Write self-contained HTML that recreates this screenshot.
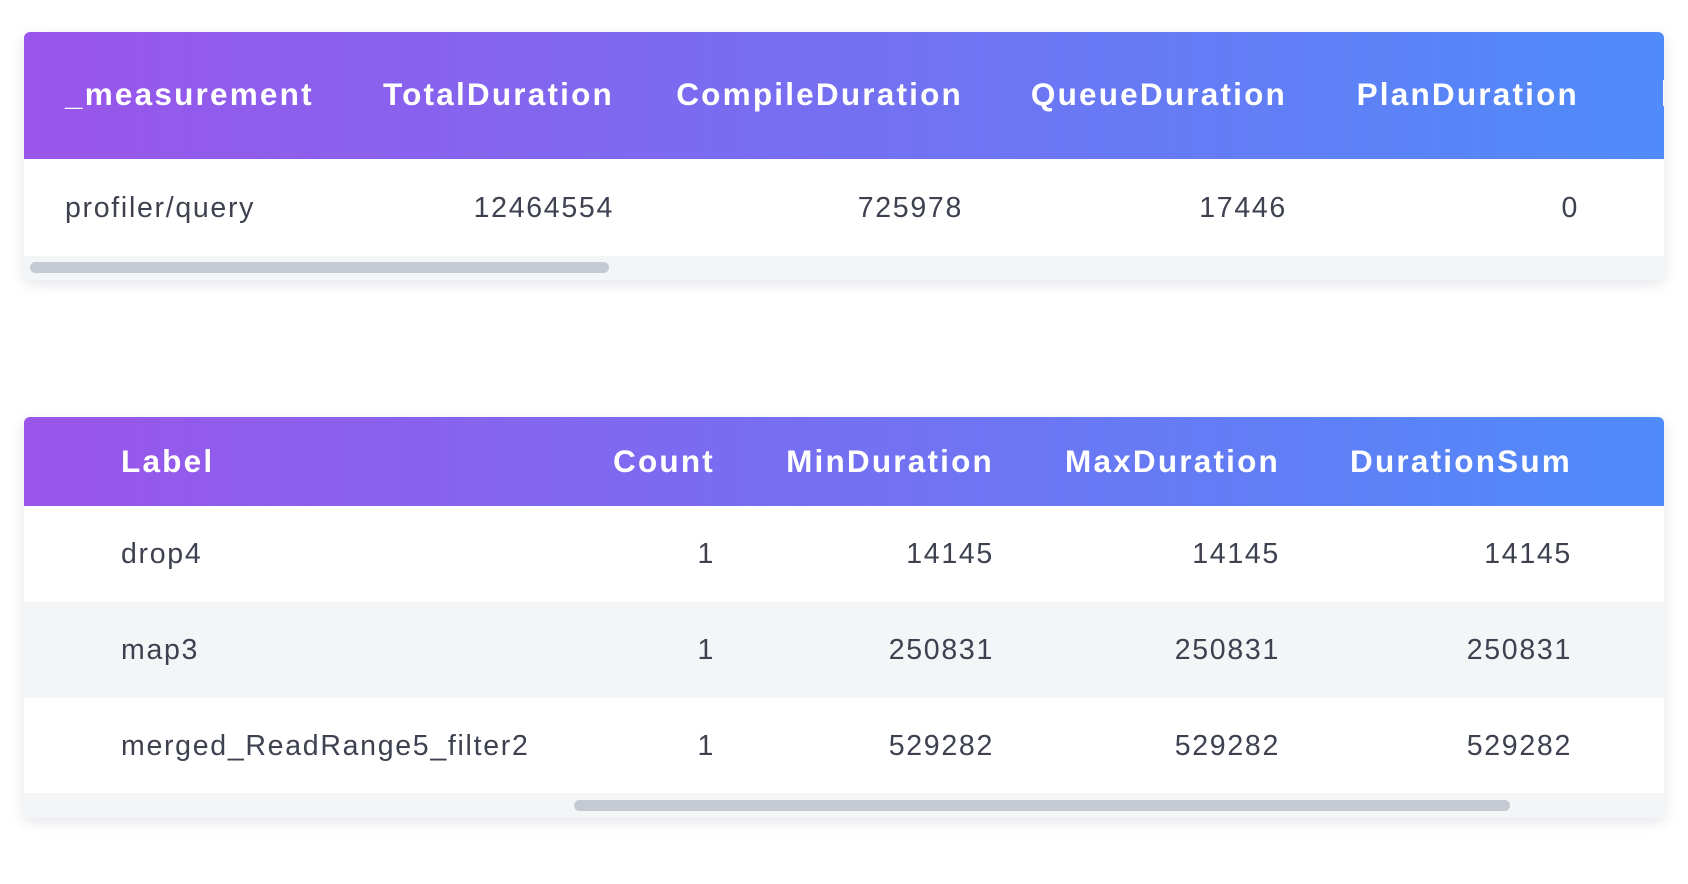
<!DOCTYPE html><html><head><style>
body{margin:0;width:1688px;height:884px;background:#fff;font-family:"Liberation Sans",sans-serif;position:relative;overflow:hidden}
.card{position:absolute;left:24px;width:1640px;background:#fff;border-radius:6px;overflow:hidden;box-shadow:0 4px 14px rgba(30,40,70,.12)}
.hd{position:absolute;left:0;top:0;width:100%;background:linear-gradient(90deg,#9a55ea,#4f8bf9)}
.t{position:absolute;white-space:nowrap;line-height:1}
.h{color:#fff;font-weight:bold;font-size:31.5px;letter-spacing:2.2px}
.d{color:#3e4150;font-size:28.5px;letter-spacing:1.7px}
.h.r{transform:translateX(-100%)}
.d.r{transform:translateX(-100%)}
.strip{position:absolute;left:0;width:100%;background:#f4f5f7}
.thumb{position:absolute;height:11px;border-radius:6px;background:#c5c9d1}
</style></head><body>
<div class="card" style="top:32px;height:248px">
<div class="hd" style="height:127px"></div>
<div class="t h" style="left:41px;top:47px">_measurement</div>
<div class="t h r" style="left:590px;top:47px">TotalDuration</div>
<div class="t h r" style="left:939px;top:47px">CompileDuration</div>
<div class="t h r" style="left:1263px;top:47px">QueueDuration</div>
<div class="t h r" style="left:1555px;top:47px">PlanDuration</div>
<div style="position:absolute;left:1639px;top:48px;width:3px;height:26px;background:#fff"></div>
<div class="t d" style="left:41px;top:162px">profiler/query</div>
<div class="t d r" style="left:590px;top:162px">12464554</div>
<div class="t d r" style="left:939px;top:162px">725978</div>
<div class="t d r" style="left:1263px;top:162px">17446</div>
<div class="t d r" style="left:1555px;top:162px">0</div>
<div class="strip" style="top:224px;height:24px"></div>
<div class="thumb" style="left:6px;top:230px;width:579px"></div>
</div>
<div class="card" style="top:417px;height:401px">
<div class="hd" style="height:89px"></div>
<div class="t h" style="left:97px;top:29px">Label</div>
<div class="t h r" style="left:691px;top:29px">Count</div>
<div class="t h r" style="left:970px;top:29px">MinDuration</div>
<div class="t h r" style="left:1256px;top:29px">MaxDuration</div>
<div class="t h r" style="left:1548px;top:29px">DurationSum</div>
<div style="position:absolute;left:0;top:185px;width:100%;height:96px;background:#f4f5f7"></div>
<div class="t d" style="left:97px;top:123px">drop4</div>
<div class="t d r" style="left:691px;top:123px">1</div>
<div class="t d r" style="left:970px;top:123px">14145</div>
<div class="t d r" style="left:1256px;top:123px">14145</div>
<div class="t d r" style="left:1548px;top:123px">14145</div>
<div class="t d" style="left:97px;top:219px">map3</div>
<div class="t d r" style="left:691px;top:219px">1</div>
<div class="t d r" style="left:970px;top:219px">250831</div>
<div class="t d r" style="left:1256px;top:219px">250831</div>
<div class="t d r" style="left:1548px;top:219px">250831</div>
<div class="t d" style="left:97px;top:315px">merged_ReadRange5_filter2</div>
<div class="t d r" style="left:691px;top:315px">1</div>
<div class="t d r" style="left:970px;top:315px">529282</div>
<div class="t d r" style="left:1256px;top:315px">529282</div>
<div class="t d r" style="left:1548px;top:315px">529282</div>
<div class="strip" style="top:376px;height:25px"></div>
<div class="thumb" style="left:550px;top:383px;width:936px"></div>
</div>
</body></html>
